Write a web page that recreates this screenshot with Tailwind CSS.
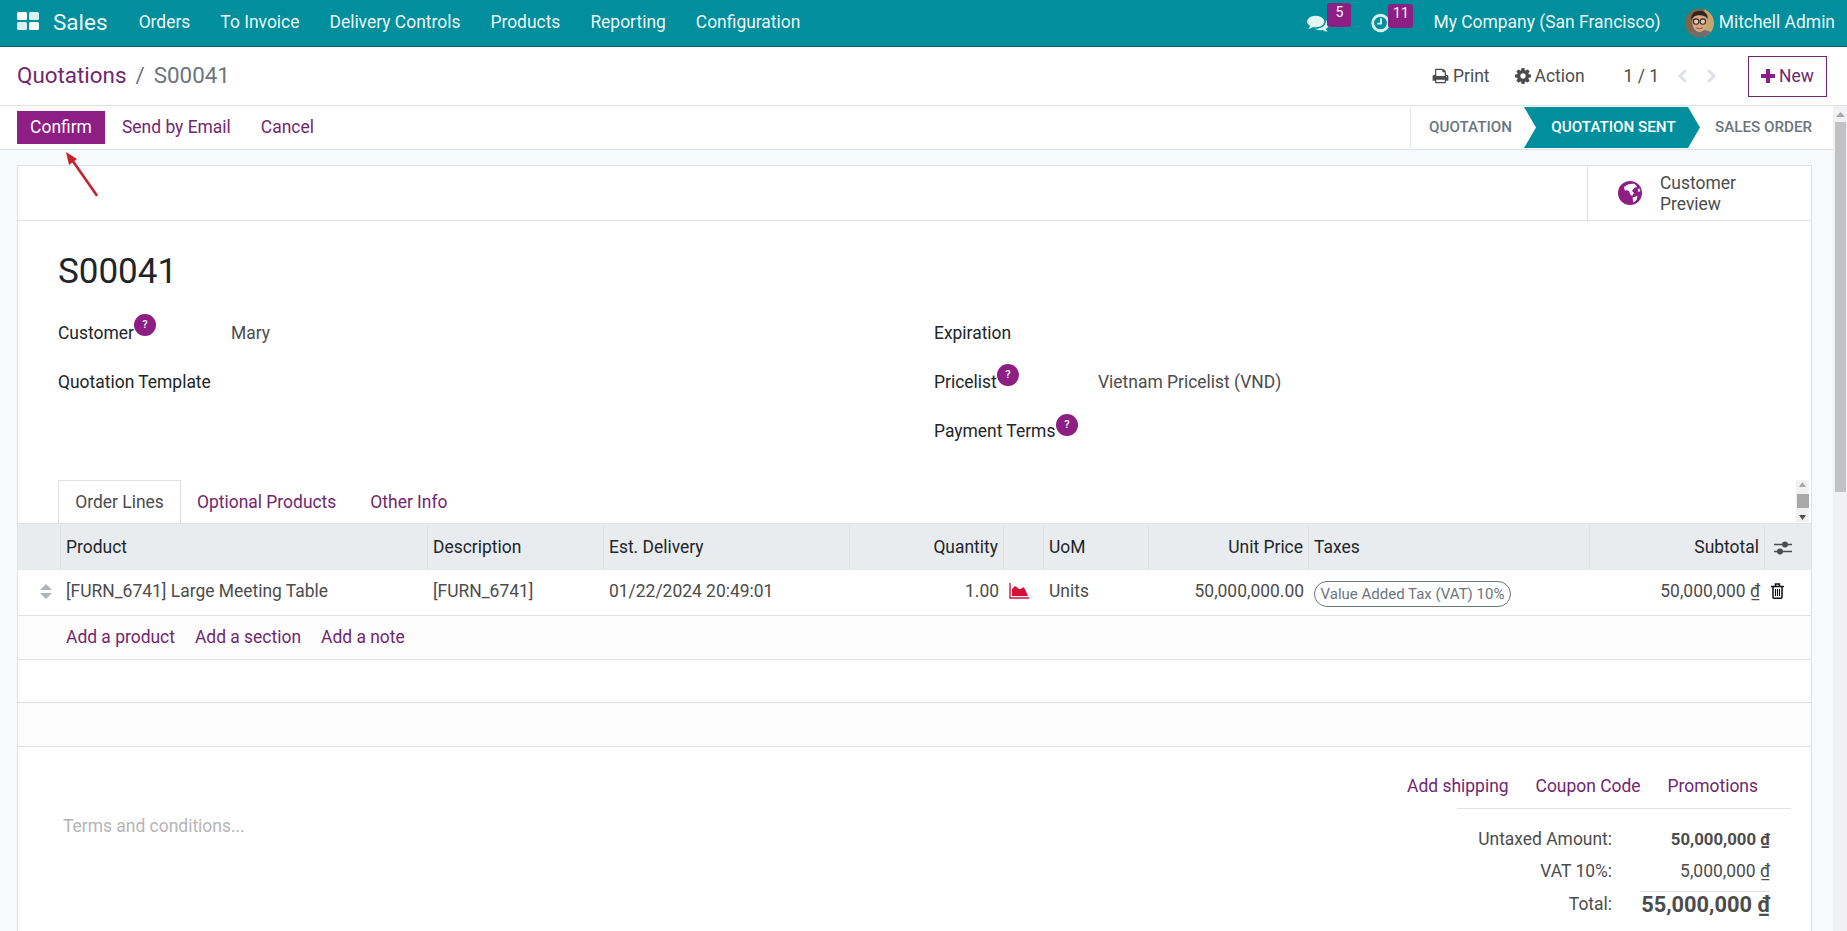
<!DOCTYPE html>
<html>
<head>
<meta charset="utf-8">
<script src="https://cdn.jsdelivr.net/npm/@tailwindcss/browser@4"></script>
</head>
<body class="w-[1847px] h-[931px] overflow-hidden font-['Roboto',sans-serif] text-[17.450px] text-[#212529] bg-white">
<div class="relative flex flex-col h-[931px] overflow-hidden">
  <!-- Top nav -->
  <header class="h-[47px] shrink-0 bg-[#018f9e] border-b border-[#0b5f68] flex items-center pb-[1px] text-white/95">
    <svg class="ml-[17px] mb-[3px] w-[22px] h-[18px]" viewBox="0 0 22 18"><rect width="10" height="8" rx="1.5" fill="#fff"/><rect x="12" width="10" height="8" rx="1.5" fill="#d8f2f3"/><rect y="10" width="10" height="8" rx="1.5" fill="#d8f2f3"/><rect x="12" y="10" width="10" height="8" rx="1.5" fill="#fff"/></svg>
    <span class="ml-[14px] text-[22.500px] mr-[16px]">Sales</span>
    <nav class="flex">
      <a class="px-[15px]">Orders</a><a class="px-[15px]">To Invoice</a><a class="px-[15px]">Delivery Controls</a><a class="px-[15px]">Products</a><a class="px-[15px]">Reporting</a><a class="px-[15px]">Configuration</a>
    </nav>
    <div class="ml-auto flex items-center">
      <div class="relative w-[22px] h-[20px] mr-[42px]">
        <svg class="w-[22px] h-[20px]" viewBox="0 0 1792 1792" preserveAspectRatio="none"><path fill="#e3f6f6" d="M1408 768q0 139-94 257t-256.5 186.5-353.5 68.5q-86 0-176-16-124 88-278 128-36 9-86 16h-3q-11 0-20.5-8t-11.5-21q-1-3-1-6.5t.5-6.5 2-6l2.5-5 3.5-5.5 4-5 4.5-5 4-4.5q5-6 23-25t26-29.5 22.5-29 25-38.5 20.5-44q-124-72-195-177t-71-224q0-139 94-257t256.5-186.5 353.5-68.5 353.5 68.5 256.5 186.5 94 257zm384 256q0 120-71 224.5t-195 176.5q10 24 20.5 44t25 38.5 22.5 29 26 29.5 23 25q1 1 4 4.5t4.5 5 4 5 3.5 5.5l2.5 5 2 6 .5 6.5-1 6.5q-3 14-13 22t-22 7q-50-7-86-16-154-40-278-128-90 16-176 16-271 0-472-132 58 4 88 4 161 0 309-45t264-129q125-92 192-212t67-254q0-77-23-152 129 71 204 178t75 230z"/></svg>
        <span class="absolute left-[20px] top-[-10px] w-[24px] h-[24px] rounded-[3px] bg-[#8d1e83] text-white text-[14px] leading-[19px] text-center">5</span>
      </div>
      <div class="relative w-[18px] h-[20px] mr-[44px]">
        <svg class="w-[19px] h-[20px]" viewBox="0 0 20 20" fill="none" stroke="#d6f3f3" stroke-width="3"><circle cx="10" cy="10" r="8.2"/><path stroke-width="2" d="M10.5 5v5.700H6.500"/></svg>
        <span class="absolute left-[17px] top-[-9px] w-[25px] h-[24px] rounded-[3px] bg-[#8d1e83] text-white text-[14px] leading-[19px] text-center">11</span>
      </div>
      <span class="whitespace-nowrap">My Company (San Francisco)</span>
      <svg class="ml-[24px] w-[29px] h-[30px]" viewBox="0 0 30 30"><defs><clipPath id="av"><circle cx="15" cy="15" r="15"/></clipPath></defs><g clip-path="url(#av)"><rect width="30" height="30" fill="#7c6548"/><rect x="20" width="10" height="30" fill="#c4a56c"/><path d="M0 30c2-7 8-8 15-8s13 1 15 8z" fill="#716d6c"/><ellipse cx="15" cy="14.500" rx="7.500" ry="10" fill="#d8a684"/><path d="M6.500 12C6 5 10 2.500 15 2.500S24 5 23.500 11c-2-3-5-4-8.500-4S8.500 8 6.500 12z" fill="#2f2420"/><circle cx="11.500" cy="13.500" r="2.800" fill="#e8c8b0" stroke="#2e2522" stroke-width="1.100"/><circle cx="18.500" cy="13.500" r="2.800" fill="#e8c8b0" stroke="#2e2522" stroke-width="1.100"/><path d="M11.500 20q3.500 2 7 0" stroke="#8a4e3c" stroke-width="1" fill="none"/></g></svg>
      <span class="ml-[5px] mr-[12px] whitespace-nowrap">Mitchell Admin</span>
    </div>
  </header>

  <!-- Control panel -->
  <div class="h-[59px] shrink-0 border-b border-[#dee2e6] flex items-center">
    <div class="ml-[17px] flex items-center text-[22.400px]">
      <a class="text-[#71276f]">Quotations</a><span class="mx-[9px] text-[#6c757d]">/</span><span class="text-[#6c757d]">S00041</span>
    </div>
    <div class="ml-auto flex items-center text-[#4c4c4c]">
      <svg class="w-[17px] h-[16px]" viewBox="0 0 1792 1664"><path fill="#4c4c4c" transform="translate(0 -64)" d="M448 1536h896v-256h-896v256zm0-640h896v-384h-160q-40 0-68-28t-28-68v-160h-640v640zm1152 64q0-26-19-45t-45-19-45 19-19 45 19 45 45 19 45-19 19-45zm128 0v416q0 13-9.5 22.5t-22.5 9.5h-224v160q0 40-28 68t-68 28h-960q-40 0-68-28t-28-68v-160h-224q-13 0-22.5-9.5t-9.5-22.5v-416q0-79 56.5-135.5t135.5-56.5h64v-544q0-40 28-68t68-28h672q40 0 88 20t76 48l152 152q28 28 48 76t20 88v256h64q79 0 135.5 56.5t56.5 135.5z"/></svg>
      <span class="ml-[4px]">Print</span>
      <svg class="ml-[25px] w-[16px] h-[16px]" viewBox="128 128 1536 1536"><path fill="#4c4c4c" d="M1152 896q0-106-75-181t-181-75-181 75-75 181 75 181 181 75 181-75 75-181zm512-109v222q0 12-8 23t-20 13l-185 28q-19 54-39 91 35 50 107 138 10 12 10 25t-9 23q-27 37-99 108t-94 71q-12 0-26-9l-138-108q-44 23-91 38-16 136-29 186-7 28-36 28h-222q-14 0-24.5-8.5t-11.5-21.5l-28-184q-49-16-90-37l-141 107q-10 9-25 9-14 0-25-11-126-114-165-168-7-10-7-23 0-12 8-23 15-21 51-66.5t54-70.5q-27-50-41-99l-183-27q-13-2-21-12.5t-8-23.5v-222q0-12 8-23t19-13l186-28q14-46 39-92-40-57-107-138-10-12-10-24 0-10 9-23 26-36 98.5-107.5t94.5-71.5q13 0 26 10l138 107q44-23 91-38 16-136 29-186 7-28 36-28h222q14 0 24.5 8.5t11.5 21.5l28 184q49 16 90 37l142-107q9-9 24-9 13 0 25 10 129 119 165 170 7 8 7 22 0 12-8 23-15 21-51 66.5t-54 70.5q26 50 41 98l183 28q13 2 21 12.5t8 23.5z"/></svg>
      <span class="ml-[4px]">Action</span>
      <span class="ml-[39px]">1 / 1</span>
      <svg class="ml-[18px] w-[11px] h-[16px]" viewBox="0 0 11 16" fill="none" stroke="#dee2e6" stroke-width="3"><path d="M9 2 3 8l6 6"/></svg>
      <svg class="ml-[18px] w-[11px] h-[16px]" viewBox="0 0 11 16" fill="none" stroke="#dee2e6" stroke-width="3"><path d="m2 2 6 6-6 6"/></svg>
      <button class="ml-[31px] mr-[20px] w-[79px] h-[41px] border border-[#71276f] flex items-center justify-center text-[#71276f]">
        <svg class="w-[14px] h-[14px] mr-[4px]" viewBox="0 0 14 14"><path fill="#8d1e83" d="M5 0h4v5h5v4H9v5H5V9H0V5h5z"/></svg>New
      </button>
    </div>
  </div>

  <div class="flex-1 flex min-h-0">
    <div class="flex-1 flex flex-col min-w-0 bg-[#f8f9fa]">
      <!-- Action bar -->
      <div class="h-[44px] shrink-0 bg-white border-b border-[#dee2e6] flex items-center">
        <button class="ml-[17px] w-[88px] h-[33px] bg-[#8d1e83] text-white">Confirm</button>
        <a class="ml-[17px] text-[#71276f]">Send by Email</a>
        <a class="ml-[30px] text-[#71276f]">Cancel</a>
        <div class="ml-auto h-[41px] flex items-center border-l border-[#e5e8eb] font-medium text-[15.200px] text-[#6c757d] relative w-[423px]">
          <span class="ml-[18px]">QUOTATION</span>
          <div class="absolute left-[113px] top-0 w-[177px] h-[41px] pl-[2px] bg-[#018f9e] text-white flex items-center justify-center [clip-path:polygon(0_0,164px_0,176px_50%,164px_100%,0_100%,12px_50%)]">QUOTATION SENT</div>
          <span class="absolute left-[304px]">SALES ORDER</span>
        </div>
      </div>

      <!-- Sheet -->
      <div class="ml-[17px] mr-[21px] mt-[15px] mb-[-3px] bg-white border border-[#dee2e6] flex-1 flex flex-col">
        <div class="h-[55px] shrink-0 border-b border-[#dee2e6] flex justify-end">
          <div class="w-[224px] border-l border-[#dee2e6] flex items-center text-[#4c4c4c]">
            <svg class="ml-[30px] w-[24px] h-[24px]" viewBox="0 0 24 24"><circle cx="12" cy="12" r="12" fill="#8d1e83"/><path fill="#fff" d="M6 6c3-3 8-4 11-3l2 3-3 1-2 3 2 2-2 3-2-2-1-3-3-1-1 1zM14.500 16.500l5-1.500-1 4-3 2.500zM21 7l1.500 3-2 1-1-2z"/></svg>
            <span class="ml-[18px] pt-[1px] leading-[21px] w-[100px]">Customer Preview</span>
          </div>
        </div>
        <div class="pl-[40px] pt-[25.500px]">
          <h1 class="text-[35px] leading-[50px] h-[62.500px]">S00041</h1>
          <div class="flex">
            <div class="w-[876px]">
              <div class="h-[48.500px] flex items-center">
                <span class="relative w-[173px]">Customer<span class="absolute left-[76px] top-[-6px] w-[22px] h-[22px] rounded-full bg-[#8d1e83] text-white text-[11px] font-medium leading-[22px] text-center">?</span></span>
                <span class="text-[#4c4c4c]">Mary</span>
              </div>
              <div class="h-[48.500px] flex items-center">Quotation Template</div>
            </div>
            <div>
              <div class="h-[48.500px] flex items-center">Expiration</div>
              <div class="h-[48.500px] flex items-center">
                <span class="relative w-[164px]">Pricelist<span class="absolute left-[63px] top-[-5px] w-[22px] h-[22px] rounded-full bg-[#8d1e83] text-white text-[11px] font-medium leading-[22px] text-center">?</span></span>
                <span class="text-[#4c4c4c]">Vietnam Pricelist (VND)</span>
              </div>
              <div class="h-[48.500px] flex items-center pt-[1px]">
                <span class="relative">Payment Terms<span class="absolute left-[122px] top-[-4px] w-[22px] h-[22px] rounded-full bg-[#8d1e83] text-white text-[11px] font-medium leading-[22px] text-center">?</span></span>
              </div>
            </div>
          </div>
        </div>
        <!-- Tabs -->
        <div class="relative flex h-[43px] mt-[25px] pl-[40px] shrink-0 items-center">
          <div class="h-[43px] w-[123px] pt-[1px] border border-[#dee2e6] border-b-0 bg-white flex items-center justify-center text-[#4c4c4c] z-10">Order Lines</div>
          <a class="ml-[16px] pt-[2px] text-[#71276f]">Optional Products</a>
          <a class="ml-[34px] pt-[2px] text-[#71276f]">Other Info</a>
          <div class="absolute right-[2px] top-0 w-[13px] h-[42px] bg-[#f1f1f1] flex flex-col items-center justify-between py-[2px]">
            <svg class="w-[7px] h-[5px]" viewBox="0 0 7 5"><path d="M3.500 0 7 5H0z" fill="#a8a8a8"/></svg>
            <div class="w-[12px] h-[14px] bg-[#a8a8a8]"></div>
            <svg class="w-[7px] h-[5px]" viewBox="0 0 7 5"><path d="M0 0h7L3.500 5z" fill="#505050"/></svg>
          </div>
        </div>
        <!-- Table -->
        <div class="shrink-0 grid grid-cols-[43px_367px_176px_246px_154px_40px_105px_160px_281px_175px_45px] h-[47px] pt-[1px] bg-[#e9ecef] border-t border-[#dee2e6] text-[#212529] [&>div]:border-r [&>div]:border-[#dfe2e5] [&>div]:flex [&>div]:items-center [&>div]:px-[5px]">
          <div></div><div>Product</div><div>Description</div><div>Est. Delivery</div><div class="justify-end">Quantity</div><div></div><div>UoM</div><div class="justify-end">Unit Price</div><div>Taxes</div><div class="justify-end">Subtotal</div>
          <div class="!border-r-0 !pl-[9px]"><svg class="w-[18px] h-[15px]" viewBox="0 0 18 15" fill="none"><path d="M0 4.500h18M0 11.500h18" stroke="#4c4c4c" stroke-width="1.300"/><circle cx="11" cy="4.500" r="3" fill="#4c4c4c"/><circle cx="6" cy="11.500" r="3" fill="#4c4c4c"/></svg></div>
        </div>
        <div class="shrink-0 grid grid-cols-[43px_367px_176px_246px_154px_40px_105px_160px_281px_175px_45px] h-[46px] border-b border-[#dee2e6] text-[#4c4c4c] [&>div]:flex [&>div]:items-center [&>div]:px-[5px] [&>div]:pb-[2px]">
          <div class="justify-end !pr-[9px]"><svg class="w-[12px] h-[15px]" viewBox="0 0 12 15"><path d="M6 0l6 6H0zM0 9h12l-6 6z" fill="#adb5bd"/></svg></div>
          <div>[FURN_6741] Large Meeting Table</div><div>[FURN_6741]</div><div>01/22/2024 20:49:01</div><div class="justify-end">1.00</div>
          <div><svg class="w-[20px] h-[16px]" viewBox="0 0 20 16"><path d="M3 13V6l3-3 3 2 1 1h2l2-2 2 2 3 7z" fill="#d3123c"/><path d="M1 0v15h19" fill="none" stroke="#d3123c" stroke-width="1.400"/></svg></div>
          <div>Units</div><div class="justify-end">50,000,000.00</div>
          <div><span class="h-[26px] w-[197px] rounded-[13px] border border-[#6c757d] text-[15px] text-[#6c757d] flex items-center justify-center mt-[6px] whitespace-nowrap">Value Added Tax (VAT) 10%</span></div>
          <div class="justify-end">50,000,000&nbsp;₫</div>
          <div class="!pl-[5px]"><svg class="w-[15px] h-[16px]" viewBox="0 0 15 16" fill="none" stroke="#111" stroke-width="1.500"><path d="M1 3.500h13M3 3.500V14q0 1.200 1 1.200h7q1 0 1-1.200V3.500M5.500 3.500V1h4v2.500"/><path d="M5.500 6v7M7.500 6v7M9.500 6v7" stroke-width="1.100"/></svg></div>
        </div>
        <div class="h-[44px] shrink-0 bg-[#fcfcfc] border-b border-[#dee2e6] flex items-center pl-[48px] text-[#71276f]">
          <a>Add a product</a><a class="ml-[20px]">Add a section</a><a class="ml-[20px]">Add a note</a>
        </div>
        <div class="h-[43px] shrink-0 border-b border-[#dee2e6]"></div>
        <div class="h-[44px] shrink-0 bg-[#fcfcfc] border-b border-[#dee2e6]"></div>
        <!-- Notes / totals -->
        <div class="flex flex-1">
          <div class="pl-[45px] pt-[66px] text-[#b5b5b5]">Terms and conditions...</div>
          <div class="ml-auto mr-[20px] w-[334px] flex flex-col">
            <div class="h-[62px] flex items-center justify-end pr-[33px] border-b border-[#dee2e6] text-[#71276f] pt-[18px] whitespace-nowrap">
              <a>Add shipping</a><a class="ml-[27px]">Coupon Code</a><a class="ml-[27px]">Promotions</a>
            </div>
            <div class="grid grid-cols-[155px_158px] text-[#4c4c4c] mt-[15px] items-start">
              <div class="text-right h-[31px] leading-[31px]">Untaxed Amount:</div><div class="text-right font-bold text-[16.800px] h-[31px] leading-[31px]">50,000,000&nbsp;₫</div>
              <div class="text-right h-[36px] leading-[32px]">VAT 10%:</div><div class="text-right h-[36px] leading-[32px]">5,000,000&nbsp;₫</div>
              <div class="text-right h-[26px] leading-[26px]">Total:</div><div class="text-right h-[27px] leading-[26px] font-bold text-[21.800px] border-t border-[#dee2e6] ml-[28px] whitespace-nowrap">55,000,000&nbsp;₫</div>
            </div>
          </div>
        </div>
      </div>
    </div>
    <!-- Page scrollbar -->
    <div class="w-[14px] shrink-0 bg-[#f1f1f3] flex flex-col items-center">
      <svg class="mt-[6px] w-[9px] h-[5px]" viewBox="0 0 9 5"><path d="M4.500 0 9 5H0z" fill="#a8a8a8"/></svg>
      <div class="mt-[5px] w-[11px] h-[370px] bg-[#c1c1c1]"></div>
    </div>
  </div>

  <!-- Annotation arrow -->
  <svg class="absolute left-[60px] top-[148px] w-[42px] h-[52px]" viewBox="0 0 42 52" fill="none"><path d="M36.500 47 10 9" stroke="#c5222c" stroke-width="2.600" stroke-linecap="round"/><path d="M6 4 17 11 9 17z" fill="#c5222c"/></svg>
</div>
</body>
</html>
